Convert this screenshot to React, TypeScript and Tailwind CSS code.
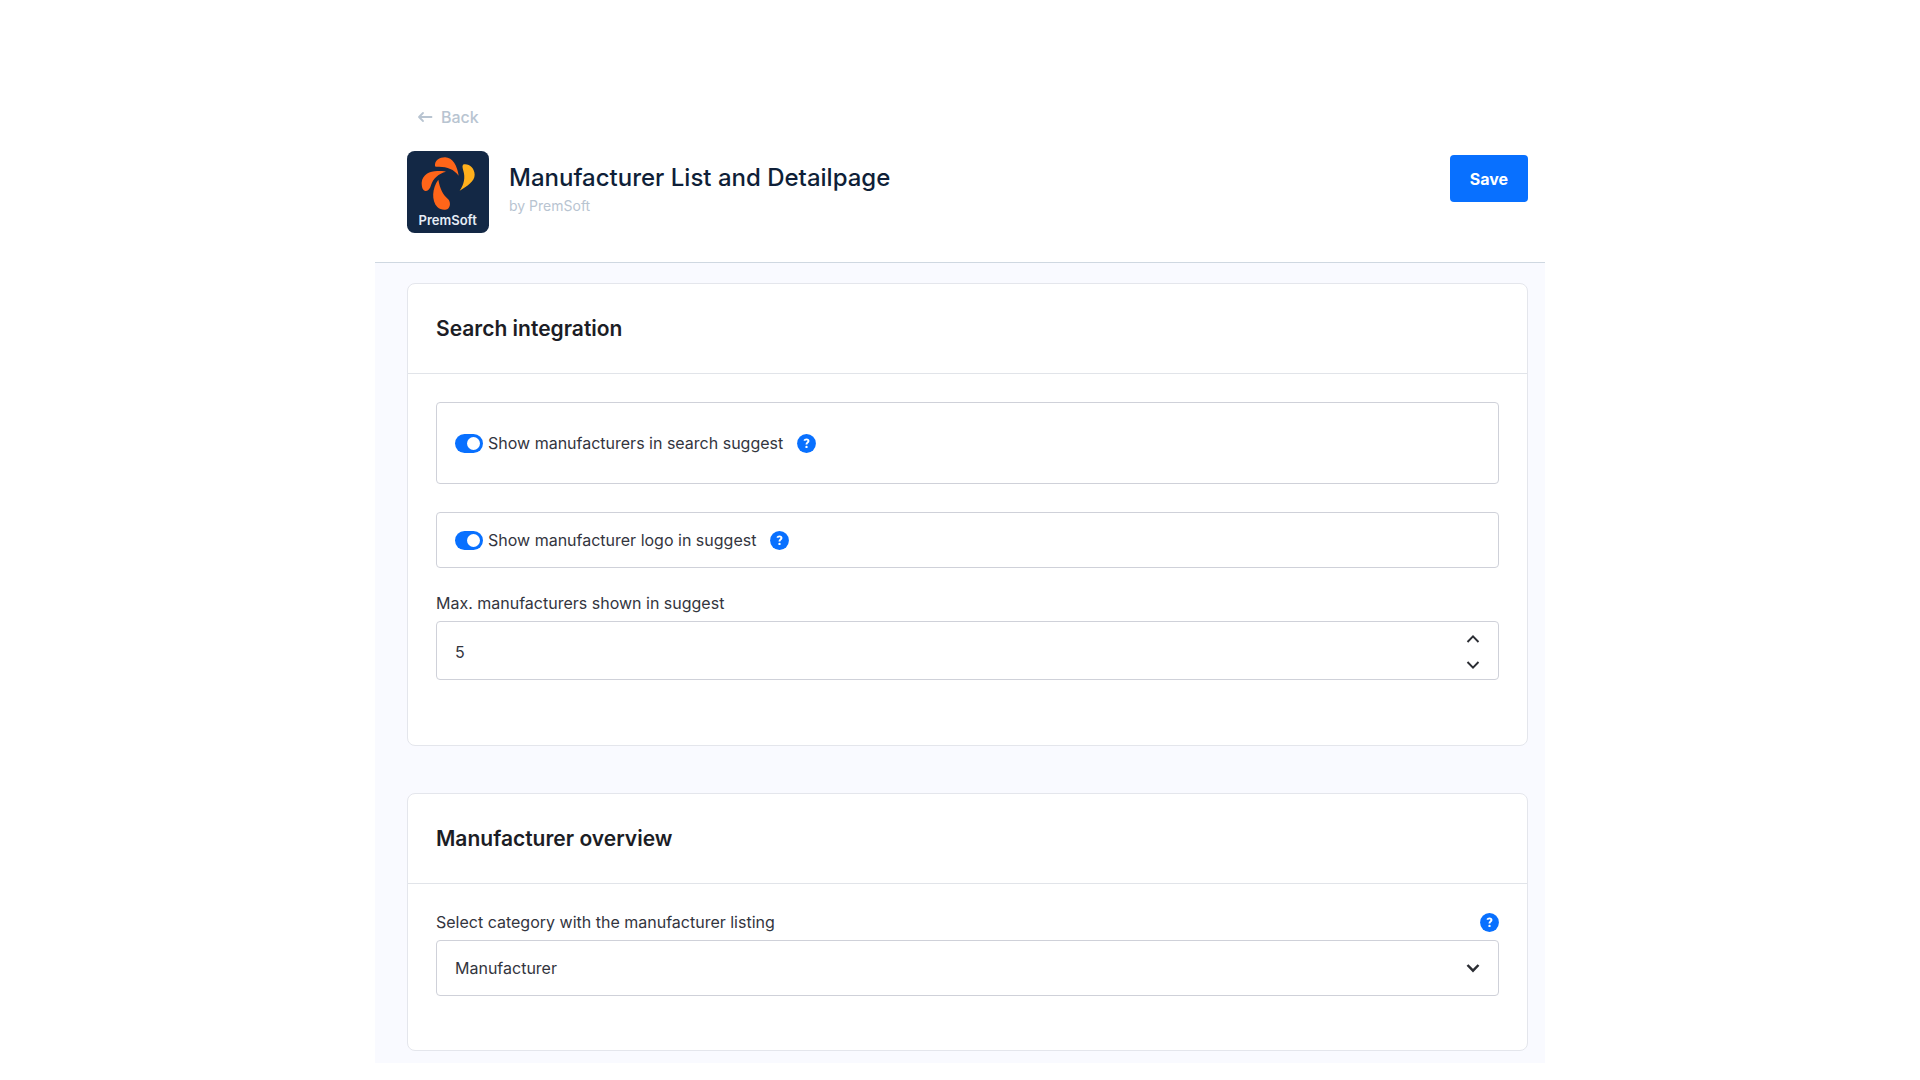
import { useState } from "react";
import type { ReactNode } from "react";

function HelpButton({ text }: { text: string }) {
  return (
    <button type="button" aria-label={text} className="size-[19px] shrink-0">
      <svg viewBox="0 0 19 19" className="size-full" fill="none">
        <circle cx="9.5" cy="9.5" r="9.4" fill="#0870ff" />
        <path
          d="M7.2 6.700C7.600 5.900 8.400 5.400 9.400 5.400c1.200 0 2.100.700 2.100 1.700 0 1.500-2 1.500-2 3.200v.3"
          stroke="white"
          strokeWidth="1.9"
        />
        <circle cx="9.5" cy="12.900" r="1.200" fill="white" />
      </svg>
    </button>
  );
}

function Chevron({ up = false, bold = false }: { up?: boolean; bold?: boolean }) {
  return (
    <svg viewBox="0 0 14 10" className="h-[10px] w-[14px]" fill="none" aria-hidden="true">
      <path
        d={up ? "M1.500 8 7 2.300 12.500 8" : "M1.500 2 7 7.700 12.500 2"}
        stroke="#2b2d33"
        strokeWidth={bold ? 2.5 : 1.9}
      />
    </svg>
  );
}

function Logo() {
  return (
    <svg viewBox="23 32 246 246" className="size-[82px] shrink-0" role="img" aria-label="PremSoft">
      <rect x="23" y="32" width="246" height="246" rx="23" fill="#132845" />
      <path
        d="M107 78C105 60 121 51 137 51C160 51 174 77 178 106C164 87 144 79 119 79C112 79 108 80 107 78Z"
        fill="#ff6519"
      />
      <path
        d="M140 94C118 100 101 114 95 135C92 147 84 155 76 151C69 148 67 137 67 127C69 103 91 92 114 92C124 92 133 92 140 94Z"
        fill="#ff6519"
      />
      <path
        d="M117 118C122 145 130 162 145 175C154 183 154 198 146 205C138 211 122 208 114 200C96 181 98 143 117 118Z"
        fill="#ff6519"
      />
      <path
        d="M193 72C210 69 226 84 226 103C226 123 203 137 181 151C195 130 198 112 192 91C189 81 188 75 193 72Z"
        fill="#ffb01c"
      />
      <text
        x="145"
        y="253"
        textAnchor="middle"
        fill="#e6ecf5"
        fontFamily="Inter, sans-serif"
        fontSize="39"
        fontWeight="600"
      >
        PremSoft
      </text>
    </svg>
  );
}

function Card({ title, children }: { title: string; children: ReactNode }) {
  return (
    <section className="rounded-lg border border-[#e4e6ec] bg-white">
      <h2 className="border-b border-[#e1e4e9] px-7 py-[30px] text-[21px] leading-[29px] font-semibold text-[#1c1d25]">
        {title}
      </h2>
      {children}
    </section>
  );
}

type ToggleProps = {
  id: string;
  label: string;
  help: string;
  checked: boolean;
  onChange: (checked: boolean) => void;
  className: string;
};

function Toggle({ id, label, help, checked, onChange, className }: ToggleProps) {
  return (
    <div className={`flex items-center rounded border border-[#cfd1d9] px-[18px] ${className}`}>
      <input
        id={id}
        type="checkbox"
        role="switch"
        checked={checked}
        onChange={(e) => onChange(e.target.checked)}
        className="flex h-[19px] w-7 shrink-0 appearance-none items-center rounded-full bg-gray-300 px-[3px] before:size-[13px] before:rounded-full before:bg-white checked:justify-end checked:bg-[#0870ff]"
      />
      <label htmlFor={id} className="mr-[14px] ml-[5px]">
        {label}
      </label>
      <HelpButton text={help} />
    </div>
  );
}

export default function App() {
  const [showSuggest, setShowSuggest] = useState(true);
  const [showLogo, setShowLogo] = useState(true);
  const [max, setMax] = useState(5);
  const [category, setCategory] = useState("Manufacturer");

  return (
    <div className="min-h-screen bg-white pt-[90px] pb-4 font-['Inter',sans-serif] text-base leading-6 text-[#33353e]">
      <div className="mx-auto max-w-[1170px]">
        <header className="border-b border-[#cfd8e1] pr-[17px] pb-[29px] pl-8">
          <a href="#" className="ml-[10px] inline-flex items-center gap-2 pt-[15px] font-medium text-[#b8c4d1]">
            <svg viewBox="0 0 16 12" className="h-3 w-4" fill="none" stroke="currentColor" strokeWidth="1.8" aria-hidden="true">
              <path d="M14.500 6H2.500M6 2 2 6l4 4" strokeLinecap="round" strokeLinejoin="round" />
            </svg>
            Back
          </a>
          <div className="mt-[22px] flex">
            <Logo />
            <div className="ml-5 flex-1 pt-3">
              <h1 className="text-2xl leading-[30px] font-medium text-[#0f1f38]">Manufacturer List and Detailpage</h1>
              <p className="mt-[3px] text-sm leading-5 text-[#b8c4d1]">by PremSoft</p>
            </div>
            <button
              type="button"
              className="mt-1 h-[47px] rounded bg-[#0870ff] px-5 font-bold text-white"
            >
              Save
            </button>
          </div>
        </header>

        <main className="flex flex-col gap-[47px] bg-[#f9faff] pt-5 pr-[17px] pb-3 pl-8">
          <Card title="Search integration">
            <div className="px-7 pt-7 pb-[65px]">
              <Toggle
                id="show-suggest"
                label="Show manufacturers in search suggest"
                help="Help for manufacturers in search suggest"
                checked={showSuggest}
                onChange={setShowSuggest}
                className="h-[82px]"
              />
              <Toggle
                id="show-logo"
                label="Show manufacturer logo in suggest"
                help="Help for manufacturer logo in suggest"
                checked={showLogo}
                onChange={setShowLogo}
                className="mt-7 h-14"
              />
              <label htmlFor="max" className="mt-[23px] mb-[6px] block">
                Max. manufacturers shown in suggest
              </label>
              <div className="flex h-[59px] rounded border border-[#cfd1d9]">
                <input
                  id="max"
                  type="text"
                  inputMode="numeric"
                  value={max}
                  onChange={(e) => setMax(Number(e.target.value) || 0)}
                  className="min-w-0 flex-1 rounded px-[18px] pt-[2px] outline-none"
                />
                <div className="mr-[18px] flex flex-col justify-center gap-4 pt-[2px]">
                  <button type="button" aria-label="Increase" onClick={() => setMax(max + 1)}>
                    <Chevron up />
                  </button>
                  <button type="button" aria-label="Decrease" onClick={() => setMax(max - 1)}>
                    <Chevron />
                  </button>
                </div>
              </div>
            </div>
          </Card>

          <Card title="Manufacturer overview">
            <div className="px-7 pt-[26px] pb-[54px]">
              <div className="mb-[6px] flex items-center justify-between">
                <label htmlFor="category">Select category with the manufacturer listing</label>
                <HelpButton text="Help for manufacturer listing category" />
              </div>
              <div className="relative">
                <select
                  id="category"
                  value={category}
                  onChange={(e) => setCategory(e.target.value)}
                  className="h-14 w-full appearance-none rounded border border-[#cfd1d9] bg-white px-[18px]"
                >
                  <option>Manufacturer</option>
                </select>
                <div className="pointer-events-none absolute inset-y-0 right-[19px] flex items-center">
                  <Chevron bold />
                </div>
              </div>
            </div>
          </Card>
        </main>
      </div>
    </div>
  );
}
